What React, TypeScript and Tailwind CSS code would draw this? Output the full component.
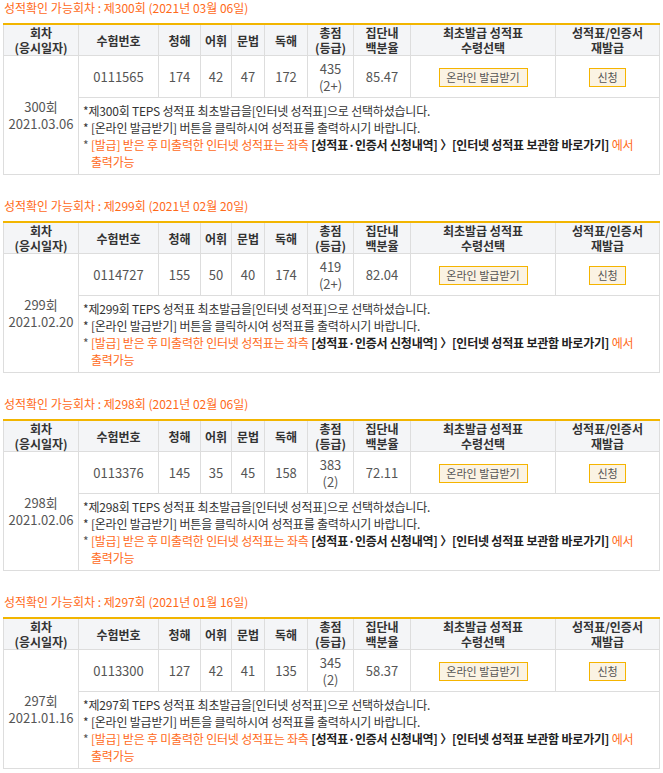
const font = { fontFamily: '"Noto Sans CJK KR", "Noto Sans", sans-serif' };

type Round = {
  no: number;
  date: string;
  label: string;
  id: string;
  listening: number;
  vocab: number;
  grammar: number;
  reading: number;
  total: number;
  grade: string;
  pct: string;
};

const rounds: Round[] = [
  { no: 300, date: "2021.03.06", label: "2021년 03월 06일", id: "0111565", listening: 174, vocab: 42, grammar: 47, reading: 172, total: 435, grade: "2+", pct: "85.47" },
  { no: 299, date: "2021.02.20", label: "2021년 02월 20일", id: "0114727", listening: 155, vocab: 50, grammar: 40, reading: 174, total: 419, grade: "2+", pct: "82.04" },
  { no: 298, date: "2021.02.06", label: "2021년 02월 06일", id: "0113376", listening: 145, vocab: 35, grammar: 45, reading: 158, total: 383, grade: "2", pct: "72.11" },
  { no: 297, date: "2021.01.16", label: "2021년 01월 16일", id: "0113300", listening: 127, vocab: 42, grammar: 41, reading: 135, total: 345, grade: "2", pct: "58.37" },
];

const th = "border border-[#dddddd] border-t-2 border-t-[#f2b500] bg-[#f4f5f7] font-bold text-[#333] leading-[15px] text-center align-middle p-0";
const td = "border border-[#dddddd] text-[#555] text-center align-middle p-0 text-[13px]";
const btn = "h-[19px] border border-[#f5b400] bg-[#fbf3e3] text-[11px] leading-[17px] text-[#555]";

function ScoreTable({ r }: { r: Round }) {
  return (
    <div className="mb-[23px]">
      <div className="text-[12px] leading-[16px] h-[16px] text-[#ff6a1a] pl-[1px] mb-[7px]">
        성적확인 가능회차 : 제{r.no}회 ({r.label})
      </div>
      <table className="w-[656px] table-fixed border-collapse text-[12px]">
        <colgroup>
          <col className="w-[75px]" />
          <col className="w-[80px]" />
          <col className="w-[42px]" />
          <col className="w-[31px]" />
          <col className="w-[33px]" />
          <col className="w-[43px]" />
          <col className="w-[46px]" />
          <col className="w-[57px]" />
          <col className="w-[145px]" />
          <col className="w-[104px]" />
        </colgroup>
        <thead>
          <tr className="h-[31px]">
            <th className={th}>회차<br />(응시일자)</th>
            <th className={th}>수험번호</th>
            <th className={th}>청해</th>
            <th className={th}>어휘</th>
            <th className={th}>문법</th>
            <th className={th}>독해</th>
            <th className={th}>총점<br />(등급)</th>
            <th className={th}>집단내<br />백분율</th>
            <th className={th}>최초발급 성적표<br />수령선택</th>
            <th className={th}>성적표/인증서<br />재발급</th>
          </tr>
        </thead>
        <tbody>
          <tr className="h-[42px]">
            <td rowSpan={2} className={td + " leading-[17px]"}>
              {r.no}회<br />{r.date}
            </td>
            <td className={td}>{r.id}</td>
            <td className={td}>{r.listening}</td>
            <td className={td}>{r.vocab}</td>
            <td className={td}>{r.grammar}</td>
            <td className={td}>{r.reading}</td>
            <td className={td + " leading-[17px]"}>
              {r.total}<br />({r.grade})
            </td>
            <td className={td}>{r.pct}</td>
            <td className={td}>
              <button className={btn + " w-[89px]"}>온라인 발급받기</button>
            </td>
            <td className={td}>
              <button className={btn + " w-[37px]"}>신청</button>
            </td>
          </tr>
          <tr className="h-[77px]">
            <td colSpan={9} className="border border-[#dddddd] text-left align-middle px-[4px] py-0 leading-[17px] text-[12px] text-[#333] tracking-[-0.2px] break-keep">
              <div className="h-[17px]">*제{r.no}회 TEPS 성적표 최초발급을[인터넷 성적표]으로 선택하셨습니다.</div>
              <div className="h-[17px]">* [온라인 발급받기] 버튼을 클릭하시여 성적표를 출력하시기 바랍니다.</div>
              <div className="h-[34px] pl-[8px] indent-[-8px]">
                <span className="text-[#555]">* </span>
                <span className="text-[#ff6a1a]">[발급] 받은 후 미출력한 인터넷 성적표는 좌측 </span>
                <b className="text-[#222]">[성적표·인증서 신청내역] 〉[인터넷 성적표 보관함 바로가기]</b>
                <span className="text-[#ff6a1a]"> 에서 출력가능</span>
              </div>
            </td>
          </tr>
        </tbody>
      </table>
    </div>
  );
}

export default function App() {
  return (
    <div className="w-[663px] bg-white pl-[3px]" style={font}>
      {rounds.map((r) => (
        <ScoreTable key={r.no} r={r} />
      ))}
    </div>
  );
}
